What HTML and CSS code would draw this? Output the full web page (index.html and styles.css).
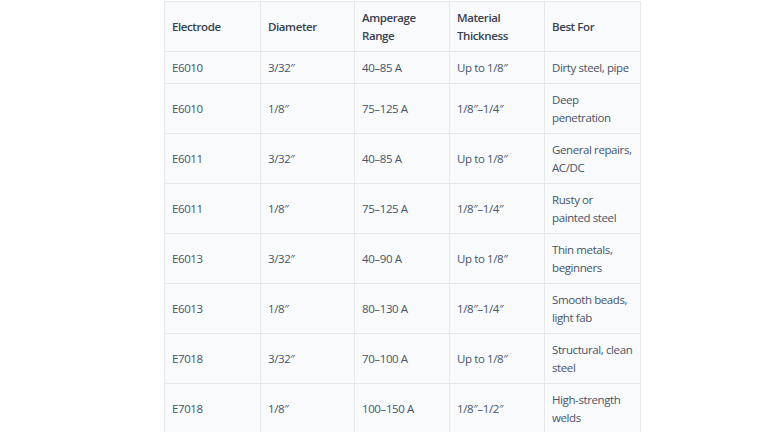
FILE: index.html
```html
<!DOCTYPE html>
<html>
<head>
<meta charset="utf-8">
<link rel="stylesheet" href="styles.css">
</head>
<body>
<div class="page">
<table class="grid">
<colgroup>
<col class="c1"><col class="c2"><col class="c3"><col class="c4"><col class="c5">
</colgroup>
<thead>
<tr><th>Electrode</th><th>Diameter</th><th>Amperage Range</th><th>Material Thickness</th><th>Best For</th></tr>
</thead>
<tbody>
<tr><td>E6010</td><td>3/32″</td><td>40–85 A</td><td>Up to 1/8″</td><td>Dirty steel, pipe</td></tr>
<tr><td>E6010</td><td>1/8″</td><td>75–125 A</td><td>1/8″–1/4″</td><td>Deep penetration</td></tr>
<tr><td>E6011</td><td>3/32″</td><td>40–85 A</td><td>Up to 1/8″</td><td>General repairs, AC/DC</td></tr>
<tr><td>E6011</td><td>1/8″</td><td>75–125 A</td><td>1/8″–1/4″</td><td>Rusty or painted&nbsp;steel</td></tr>
<tr><td>E6013</td><td>3/32″</td><td>40–90 A</td><td>Up to 1/8″</td><td>Thin metals, beginners</td></tr>
<tr><td>E6013</td><td>1/8″</td><td>80–130 A</td><td>1/8″–1/4″</td><td>Smooth beads, light fab</td></tr>
<tr><td>E7018</td><td>3/32″</td><td>70–100 A</td><td>Up to 1/8″</td><td>Structural, clean steel</td></tr>
<tr><td>E7018</td><td>1/8″</td><td>100–150 A</td><td>1/8″–1/2″</td><td>High-strength welds</td></tr>
</tbody>
</table>
</div>
</body>
</html>
```
FILE: styles.css
```css
html, body {
  margin: 0;
  padding: 0;
  background: #ffffff;
}
.page {
  padding: 1px 0 0 164px;
  font-family: "Open Sans", "Noto Sans", sans-serif;
  font-size: 11.5px;
  letter-spacing: -0.4px;
  color: #475467;
}
.grid {
  border-collapse: collapse;
  table-layout: fixed;
  width: 476px;
  background: #f9fafc;
}
.c1 { width: 96px; }
.c2 { width: 94px; }
.c3 { width: 95px; }
.c4 { width: 95px; }
.c5 { width: 96px; }
.grid th, .grid td {
  border: 1px solid #e6e8ec;
  padding: 6.5px 5px 6.5px 7px;
  line-height: 18px;
  text-align: left;
  vertical-align: middle;
}
.grid th {
  font-weight: 600;
  color: #374151;
}
```
